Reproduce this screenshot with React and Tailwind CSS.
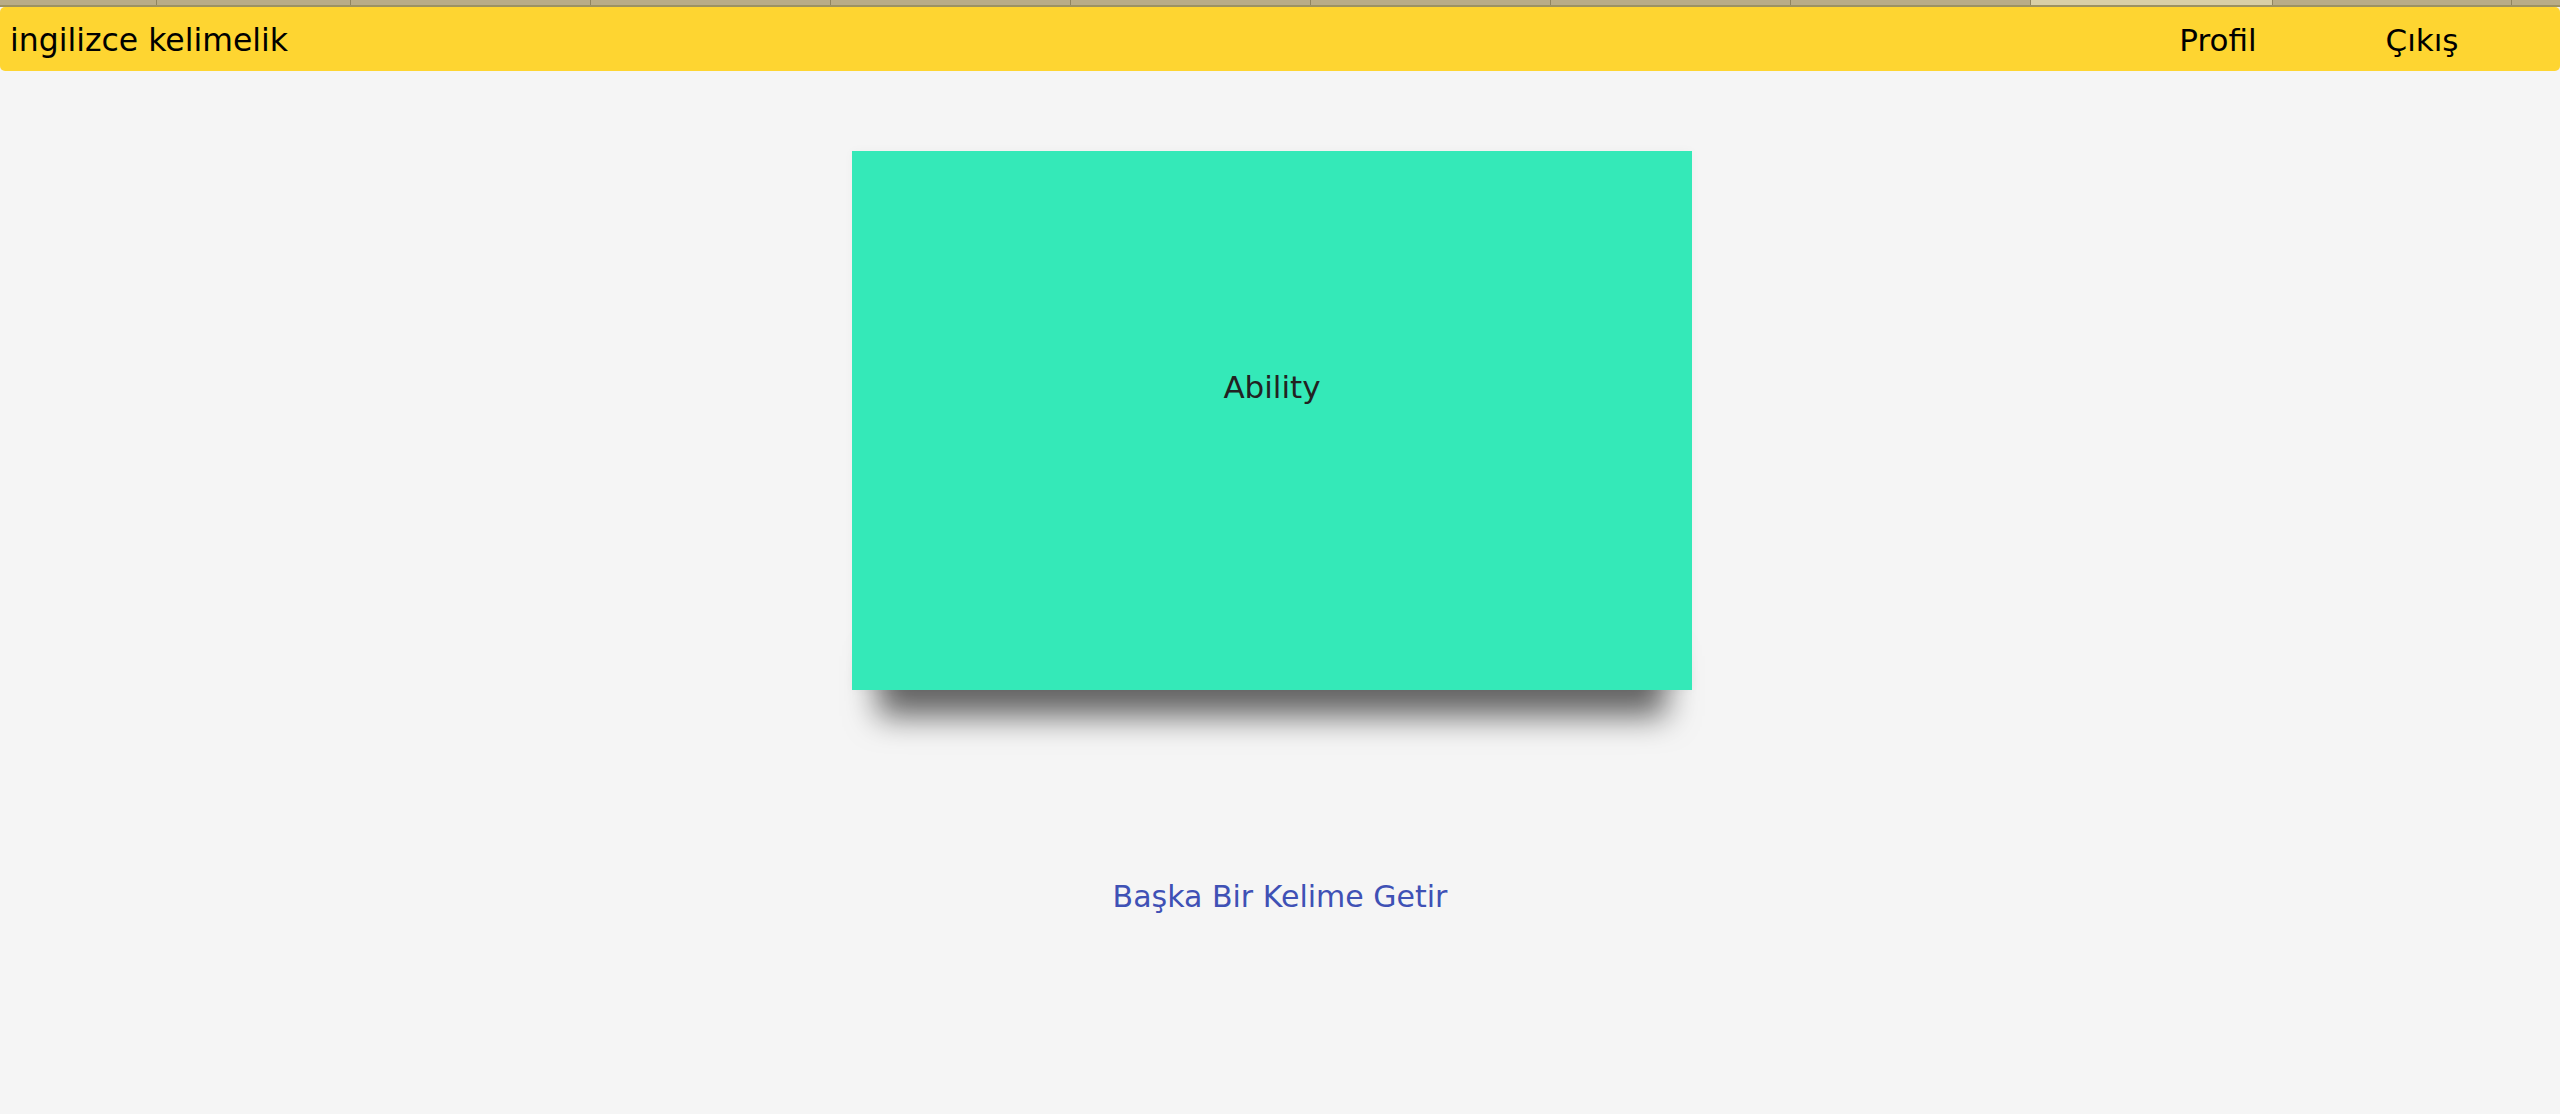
import React from 'react';

// ust sekme seridi (tarayici sekmeleri)
const tabs = [157, 194, 240, 240, 240, 240, 240, 240, 240, 242, 239];

function TabStrip() {
  return (
    <div className="w-full">
      <div className="flex h-[5px] bg-[#b9ac87]">
        {tabs.map((w, i) => (
          <div
            key={i}
            className={`h-full border-r border-[#8f845f] ${i === 9 ? 'bg-[#d9cfa7]' : ''}`}
            style={{ width: w }}
          />
        ))}
        <div className="flex-1" />
      </div>
      <div className="h-[2px] bg-[#9d9262]" />
    </div>
  );
}

function Header() {
  return (
    <header className="flex items-center h-[64px] bg-[#fed531] rounded-[5px] px-[10px] pt-[3px] text-black text-[31px] leading-none font-['DejaVu_Sans',sans-serif]">
      <span className="flex-1 text-[31.5px] leading-none">ingilizce kelimelik</span>
      <nav className="flex items-center">
        <a className="w-[204px] text-center">Profil</a>
        <a className="w-[204px] text-center mr-[26px]">Çıkış</a>
      </nav>
    </header>
  );
}

function WordCard({ word }) {
  return (
    <div className="relative w-[840px] h-[539px]">
      {/* alttaki golge */}
      <div className="absolute left-[26px] right-[26px] bottom-0 h-[60px] shadow-[0_26px_32px_rgba(0,0,0,0.6)]" />
      <div className="relative h-full bg-[#34e9b8] pt-[213px] text-center text-[31px] text-[#222] shadow-[0_0_10px_rgba(0,0,0,0.03)]">
        {word}
      </div>
    </div>
  );
}

export default function App() {
  return (
    <div className="min-h-[1114px] bg-[#f5f5f5] font-['DejaVu_Sans',sans-serif]">
      <TabStrip />
      <Header />
      <main className="flex flex-col items-center pt-[80px]">
        <div className="pr-4">
          <WordCard word="Ability" />
        </div>
        <button className="mt-[184px] text-[#3f51b5] text-[30px] bg-transparent">
          Başka Bir Kelime Getir
        </button>
      </main>
    </div>
  );
}
